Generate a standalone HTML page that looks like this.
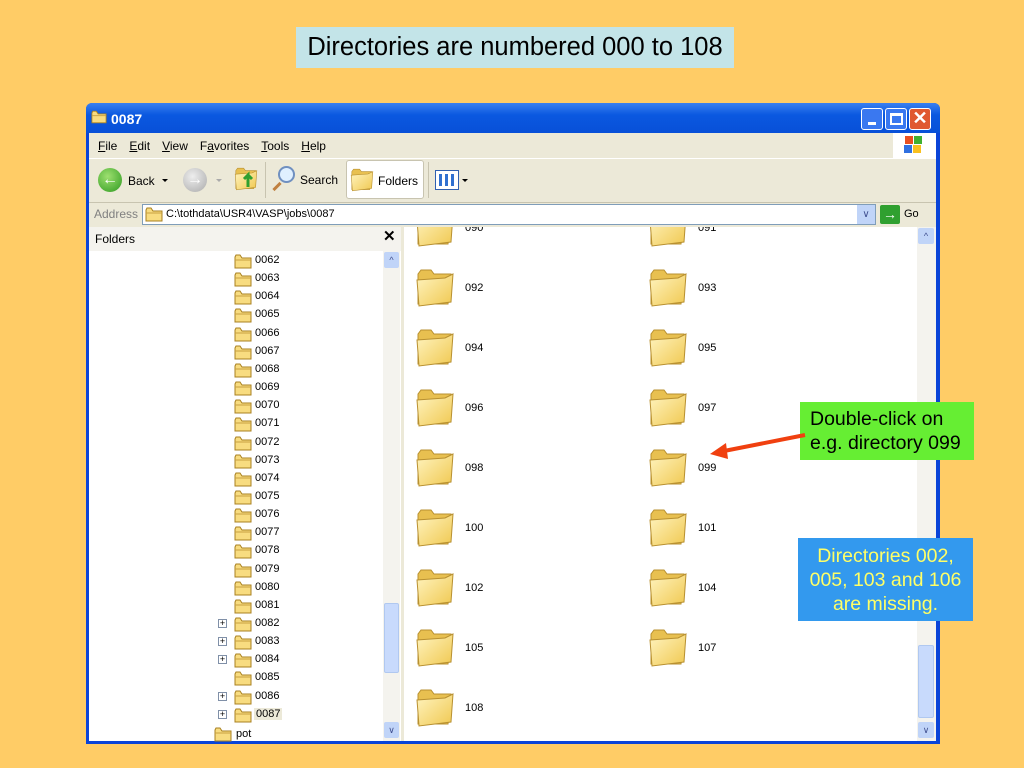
<!DOCTYPE html>
<html><head><meta charset="utf-8"><style>
*{margin:0;padding:0;box-sizing:border-box}
body{width:1024px;height:768px;background:#FFCC66;position:relative;overflow:hidden;font-family:"Liberation Sans",sans-serif}
.a{position:absolute}
.t{font-size:11px;color:#000;font-family:"Liberation Sans",sans-serif}
</style></head><body>
<svg width="0" height="0" style="position:absolute">
<defs>
<linearGradient id="fg" x1="0" y1="0" x2="1" y2="1"><stop offset="0" stop-color="#FFF4C0"/><stop offset="1" stop-color="#F0C850"/></linearGradient>
<symbol id="big" viewBox="0 0 40 40">
<path d="M3 6 L3 36 L33 36 L36 6 L19 6 L16 2 L6 2 Z" fill="#E8C050" stroke="#B89030" stroke-width="1"/>
<path d="M2 12 L30 10 L38 6 L36 34 L4 38 Z" fill="url(#fg)" stroke="#B89030" stroke-width="1"/>
</symbol>
<symbol id="sm" viewBox="0 0 18 15">
<path d="M1 3 L1 14 L17 14 L17 4 L8 4 L6 1 L2 1 Z" fill="#F8DC80" stroke="#A88020" stroke-width="1"/>
<path d="M1 6 L17 6" stroke="#C8A040" stroke-width="1"/>
</symbol>
</defs></svg>

<div class="a" style="left:296px;top:27px;width:438px;height:41px;background:#C3E4E8;font-size:25.5px;line-height:41px;text-align:center;color:#000;white-space:nowrap">Directories are numbered 000 to 108</div>

<!-- window -->
<div class="a" style="left:86px;top:103px;width:854px;height:641px;background:#0A44D8;border-radius:6px 6px 0 0"></div>
<div class="a" style="left:86px;top:103px;width:854px;height:30px;background:linear-gradient(#3A80F0,#0A58E0 40%,#0850D8);border-radius:6px 6px 0 0"></div>
<svg class="a" style="left:91px;top:110px" width="16" height="14"><use href="#sm" width="16" height="14"/></svg>
<div class="a" style="left:111px;top:111px;color:#fff;font-weight:bold;font-size:14px">0087</div>
<div class="a" style="left:861px;top:108px;width:22px;height:22px;background:#3A78F0;border:1px solid #fff;border-radius:3px"><div class="a" style="left:6px;top:13px;width:8px;height:3px;background:#fff"></div></div>
<div class="a" style="left:885px;top:108px;width:22px;height:22px;background:#3A78F0;border:1px solid #fff;border-radius:3px"><div class="a" style="left:4px;top:4px;width:13px;height:12px;border:2px solid #fff;border-top-width:3px"></div></div>
<div class="a" style="left:909px;top:108px;width:22px;height:22px;background:#E05830;border:1px solid #fff;border-radius:3px;color:#fff;font-size:18px;line-height:19px;text-align:center;font-weight:bold">✕</div>

<div class="a" style="left:89px;top:133px;width:847px;height:608px;background:#ECE9D8"></div>
<!-- menu -->
<div class="a t" style="left:98px;top:139px;font-size:12px;word-spacing:0"><span style="margin-right:12px"><u>F</u>ile</span><span style="margin-right:12px"><u>E</u>dit</span><span style="margin-right:12px"><u>V</u>iew</span><span style="margin-right:12px">F<u>a</u>vorites</span><span style="margin-right:12px"><u>T</u>ools</span><span><u>H</u>elp</span></div>
<div class="a" style="left:893px;top:133px;width:43px;height:25px;background:#fff"></div>
<div class="a" style="left:905px;top:136px;width:8px;height:8px;background:#E85020"></div><div class="a" style="left:914px;top:136px;width:8px;height:8px;background:#40B030"></div><div class="a" style="left:904px;top:145px;width:8px;height:8px;background:#3070E0"></div><div class="a" style="left:913px;top:145px;width:8px;height:8px;background:#F8C020"></div>
<div class="a" style="left:89px;top:158px;width:847px;height:1px;background:#fff"></div>
<!-- toolbar -->
<div class="a" style="left:98px;top:168px;width:24px;height:24px;border-radius:50%;background:radial-gradient(circle at 40% 35%,#9EE070,#2E9A20);color:#fff;font-size:16px;font-weight:bold;line-height:23px;text-align:center">&#8592;</div>
<div class="a t" style="left:128px;top:174px;font-size:12px">Back</div>
<div class="a" style="left:162px;top:179px;border:3px solid transparent;border-top:3px solid #000"></div>
<div class="a" style="left:183px;top:168px;width:24px;height:24px;border-radius:50%;background:radial-gradient(circle at 40% 35%,#eee,#aaa);color:#fff;font-size:16px;font-weight:bold;line-height:23px;text-align:center">&#8594;</div>
<div class="a" style="left:216px;top:179px;border:3px solid transparent;border-top:3px solid #aaa"></div>
<svg class="a" style="left:234px;top:167px" width="24" height="24"><use href="#big" width="24" height="24"/><path d="M14 20 L14 8 L10 12 M14 8 L18 12" stroke="#30A030" stroke-width="3" fill="none"/></svg>
<div class="a" style="left:265px;top:162px;width:1px;height:36px;background:#C8C4B0"></div>
<div class="a" style="left:278px;top:166px;width:17px;height:17px;border:2px solid #7090C0;border-radius:50%;background:#E0F0FF"></div>
<div class="a" style="left:272px;top:185px;width:10px;height:3px;background:#C08040;transform:rotate(-45deg)"></div>
<div class="a t" style="left:300px;top:173px;font-size:12px">Search</div>
<div class="a" style="left:346px;top:160px;width:78px;height:39px;background:#fff;border:1px solid #C8C4B0;border-radius:3px"></div>
<svg class="a" style="left:350px;top:168px" width="24" height="24"><use href="#big" width="24" height="24"/></svg>
<div class="a t" style="left:378px;top:174px;font-size:12px">Folders</div>
<div class="a" style="left:428px;top:162px;width:1px;height:36px;background:#C8C4B0"></div>
<div class="a" style="left:435px;top:170px;width:24px;height:20px;border:1px solid #3060B0;background:#fff"><div class="a" style="left:3px;top:3px;width:16px;height:12px;background:repeating-linear-gradient(90deg,#3070D0 0 3px,#fff 3px 6px)"></div></div>
<div class="a" style="left:462px;top:179px;border:3px solid transparent;border-top:3px solid #000"></div>
<!-- address -->
<div class="a" style="left:89px;top:202px;width:847px;height:1px;background:#C8C4B0"></div>
<div class="a t" style="left:94px;top:207px;color:#808080;font-size:12px">Address</div>
<div class="a" style="left:142px;top:204px;width:734px;height:21px;background:#fff;border:1px solid #7F9DB9"></div>
<svg class="a" style="left:145px;top:207px" width="18" height="15"><use href="#sm" width="18" height="15"/></svg>
<div class="a t" style="left:166px;top:208px">C:\tothdata\USR4\VASP\jobs\0087</div>
<div class="a" style="left:857px;top:205px;width:18px;height:19px;background:#C0D4F8;color:#405090;font-size:10px;text-align:center;line-height:19px">&#8744;</div>
<div class="a" style="left:880px;top:205px;width:20px;height:19px;background:#30A030;border-radius:2px;color:#fff;font-weight:bold;line-height:18px;text-align:center;font-size:14px">&#8594;</div>
<div class="a t" style="left:904px;top:208px">Go</div>

<!-- folders pane -->
<div class="a" style="left:89px;top:227px;width:312px;height:24px;background:#F4F3EE"></div>
<div class="a t" style="left:95px;top:232px;font-size:12px">Folders</div>
<div class="a" style="left:383px;top:227px;font-size:15px;font-weight:bold">✕</div>
<div class="a" style="left:89px;top:251px;width:312px;height:490px;background:#fff"></div>

<div id="tree"></div>

<div class="a" style="left:383px;top:251px;width:17px;height:490px;background:#F4F3EE"></div>
<div class="a" style="left:384px;top:252px;width:15px;height:16px;background:#C0D4F8;border-radius:2px;color:#405090;font-size:9px;text-align:center;line-height:16px">^</div>
<div class="a" style="left:384px;top:603px;width:15px;height:70px;background:#C8DAFC;border:1px solid #B0C8F0;border-radius:2px"></div>
<div class="a" style="left:384px;top:722px;width:15px;height:16px;background:#C0D4F8;border-radius:2px;color:#405090;font-size:9px;text-align:center;line-height:16px">&#8744;</div>
<div class="a" style="left:401px;top:227px;width:3px;height:514px;background:#ECE9D8"></div>

<!-- right pane -->
<div class="a" style="left:404px;top:227px;width:513px;height:514px;background:#fff;overflow:hidden" id="rp"></div>
<div class="a" style="left:917px;top:227px;width:19px;height:514px;background:#F4F3EE"></div>
<div class="a" style="left:918px;top:228px;width:16px;height:16px;background:#C0D4F8;border-radius:2px;color:#405090;font-size:9px;text-align:center;line-height:16px">^</div>
<div class="a" style="left:918px;top:645px;width:16px;height:73px;background:#C8DAFC;border:1px solid #B0C8F0;border-radius:2px"></div>
<div class="a" style="left:918px;top:722px;width:16px;height:16px;background:#C0D4F8;border-radius:2px;color:#405090;font-size:9px;text-align:center;line-height:16px">&#8744;</div>

<!-- callouts -->
<div class="a" style="left:800px;top:402px;width:174px;height:58px;background:#66EE33;font-size:19.5px;line-height:24px;padding:5px 0 0 10px;color:#000;white-space:nowrap">Double-click on<br>e.g. directory 099</div>
<div class="a" style="left:798px;top:538px;width:175px;height:83px;background:#3399EE;font-size:19.5px;line-height:24px;padding-top:6px;text-align:center;color:#FFFF66;white-space:nowrap">Directories 002,<br>005, 103 and 106<br>are missing.</div>
<svg class="a" style="left:700px;top:425px" width="110" height="40"><line x1="105" y1="10" x2="24" y2="26" stroke="#F04010" stroke-width="4"/><path d="M10 29 L26 18 L28 34 Z" fill="#F04010"/></svg>

<script>
var tr='';
for(var i=0;i<26;i++){var n=62+i,y=253+i*18.15;var p=[82,83,84,86,87].indexOf(n)>=0;
if(p)tr+='<div class="a" style="left:218px;top:'+(y+3)+'px;width:9px;height:9px;border:1px solid #8090A8;background:#fff;font-size:9px;line-height:7px;text-align:center">+</div>';
tr+='<svg class="a" style="left:234px;top:'+(y+1)+'px" width="18" height="15"><use href="#sm" width="18" height="15"/></svg>';
tr+='<div class="a t" style="left:255px;top:'+(y+1)+'px;'+(n==87?'background:#ECE9D8;padding:0 2px;left:254px':'')+'">00'+n+'</div>';}
tr+='<svg class="a" style="left:214px;top:727px" width="18" height="15"><use href="#sm" width="18" height="15"/></svg><div class="a t" style="left:236px;top:728px">pot</div>';
document.getElementById('tree').outerHTML=tr;
var names=['090','091','092','093','094','095','096','097','098','099','100','101','102','104','105','107','108'];
var r='';
for(var k=0;k<names.length;k++){var row=Math.floor(k/2),col=k%2;var y=-26+row*60;var x=col?244:11;
r+='<svg class="a" style="left:'+x+'px;top:'+(y+6)+'px" width="40" height="42"><use href="#big" width="40" height="42"/></svg>';
r+='<div class="a t" style="left:'+(x+50)+'px;top:'+(y+21)+'px">'+names[k]+'</div>';}
document.getElementById('rp').innerHTML=r;
</script>
</body></html>
